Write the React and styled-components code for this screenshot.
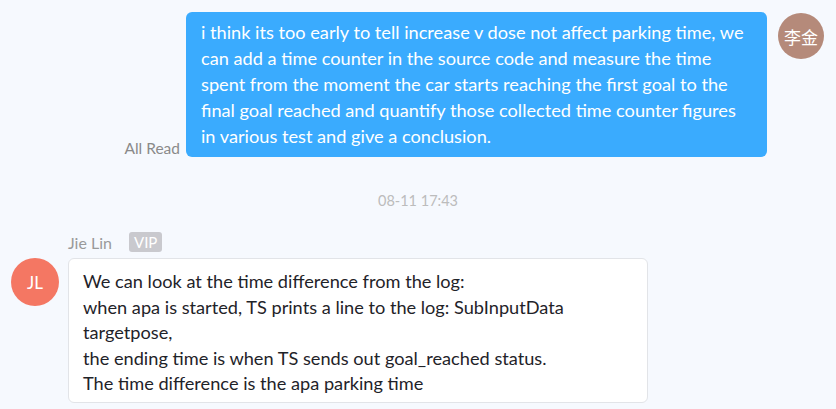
import React from "react";
import styled, { createGlobalStyle } from "styled-components";

const Global = createGlobalStyle`
  html, body { margin: 0; padding: 0; background: #f6f9fe; }
  body { font-family: "Lato", "Noto Sans CJK SC", sans-serif; }
`;

const Page = styled.div`
  width: 836px;
  height: 409px;
  background: #f6f9fe;
  display: flex;
  flex-direction: column;
  padding-top: 12px;
  box-sizing: border-box;
  overflow: hidden;
`;

const Row = styled.div`
  display: flex;
  align-items: flex-start;
  justify-content: ${(p) => (p.$mine ? "flex-end" : "flex-start")};
  padding: ${(p) => (p.$mine ? "0 12px 0 0" : "0 0 0 11px")};
  gap: ${(p) => (p.$mine ? "11px" : "9px")};
`;

const ReadStatus = styled.span`
  align-self: flex-end;
  font-size: 15.5px;
  color: #8a8a8a;
  line-height: 18px;
  margin-right: -5px;
`;

const Bubble = styled.div`
  box-sizing: border-box;
  width: ${(p) => p.$w}px;
  border-radius: 6px;
  font-size: 18.2px;
  white-space: nowrap;
  line-height: ${(p) => (p.$mine ? "26px" : "25.5px")};
  padding: ${(p) => (p.$mine ? "7px 15px 8px" : "10px 14px 5px")};
  background: ${(p) => (p.$mine ? "#3aabfe" : "#ffffff")};
  color: ${(p) => (p.$mine ? "#ffffff" : "#1f2329")};
  border: ${(p) => (p.$mine ? "none" : "1px solid #e2e4e8")};
`;

const Avatar = styled.div`
  flex: none;
  width: ${(p) => p.$size}px;
  height: ${(p) => p.$size}px;
  border-radius: 50%;
  background: ${(p) => p.$bg};
  color: #fff;
  display: flex;
  align-items: center;
  justify-content: center;
  font-size: 17px;
  margin-top: ${(p) => p.$top || 0}px;
`;

const Time = styled.div`
  text-align: center;
  font-size: 14.5px;
  color: #bcbcbc;
  line-height: 18px;
  margin: 35px 0 22px;
`;

const Column = styled.div`
  display: flex;
  flex-direction: column;
`;

const NameRow = styled.div`
  display: flex;
  align-items: center;
  gap: 17px;
  height: 20px;
  margin-bottom: 6px;
`;

const Name = styled.span`
  font-size: 16px;
  color: #9a9a9a;
`;

const Vip = styled.span`
  background: #c9c9ce;
  color: #fff;
  font-size: 15px;
  border-radius: 3px;
  padding: 0 5px;
  height: 20px;
  line-height: 20px;
`;

export default function App() {
  return (
    <>
      <Global />
      <Page>
        <Row $mine>
          <ReadStatus>All Read</ReadStatus>
          <Bubble $mine $w={581}>
            i think its too early to tell increase v dose not affect parking time, we
            <br />
            can add a time counter in the source code and measure the time
            <br />
            spent from the moment the car starts reaching the first goal to the
            <br />
            final goal reached and quantify those collected time counter figures
            <br />
            in various test and give a conclusion.
          </Bubble>
          <Avatar $size={46} $bg="#b58a7a" $top={1}>李金</Avatar>
        </Row>
        <Time>08-11 17:43</Time>
        <Row>
          <Avatar $size={48} $bg="#f47763" $top={26}>JL</Avatar>
          <Column>
            <NameRow>
              <Name>Jie Lin</Name>
              <Vip>VIP</Vip>
            </NameRow>
            <Bubble $w={580}>
              We can look at the time difference from the log:
              <br />
              when apa is started, TS prints a line to the log: SubInputData
              <br />
              targetpose,
              <br />
              the ending time is when TS sends out goal_reached status.
              <br />
              The time difference is the apa parking time
            </Bubble>
          </Column>
        </Row>
      </Page>
    </>
  );
}
